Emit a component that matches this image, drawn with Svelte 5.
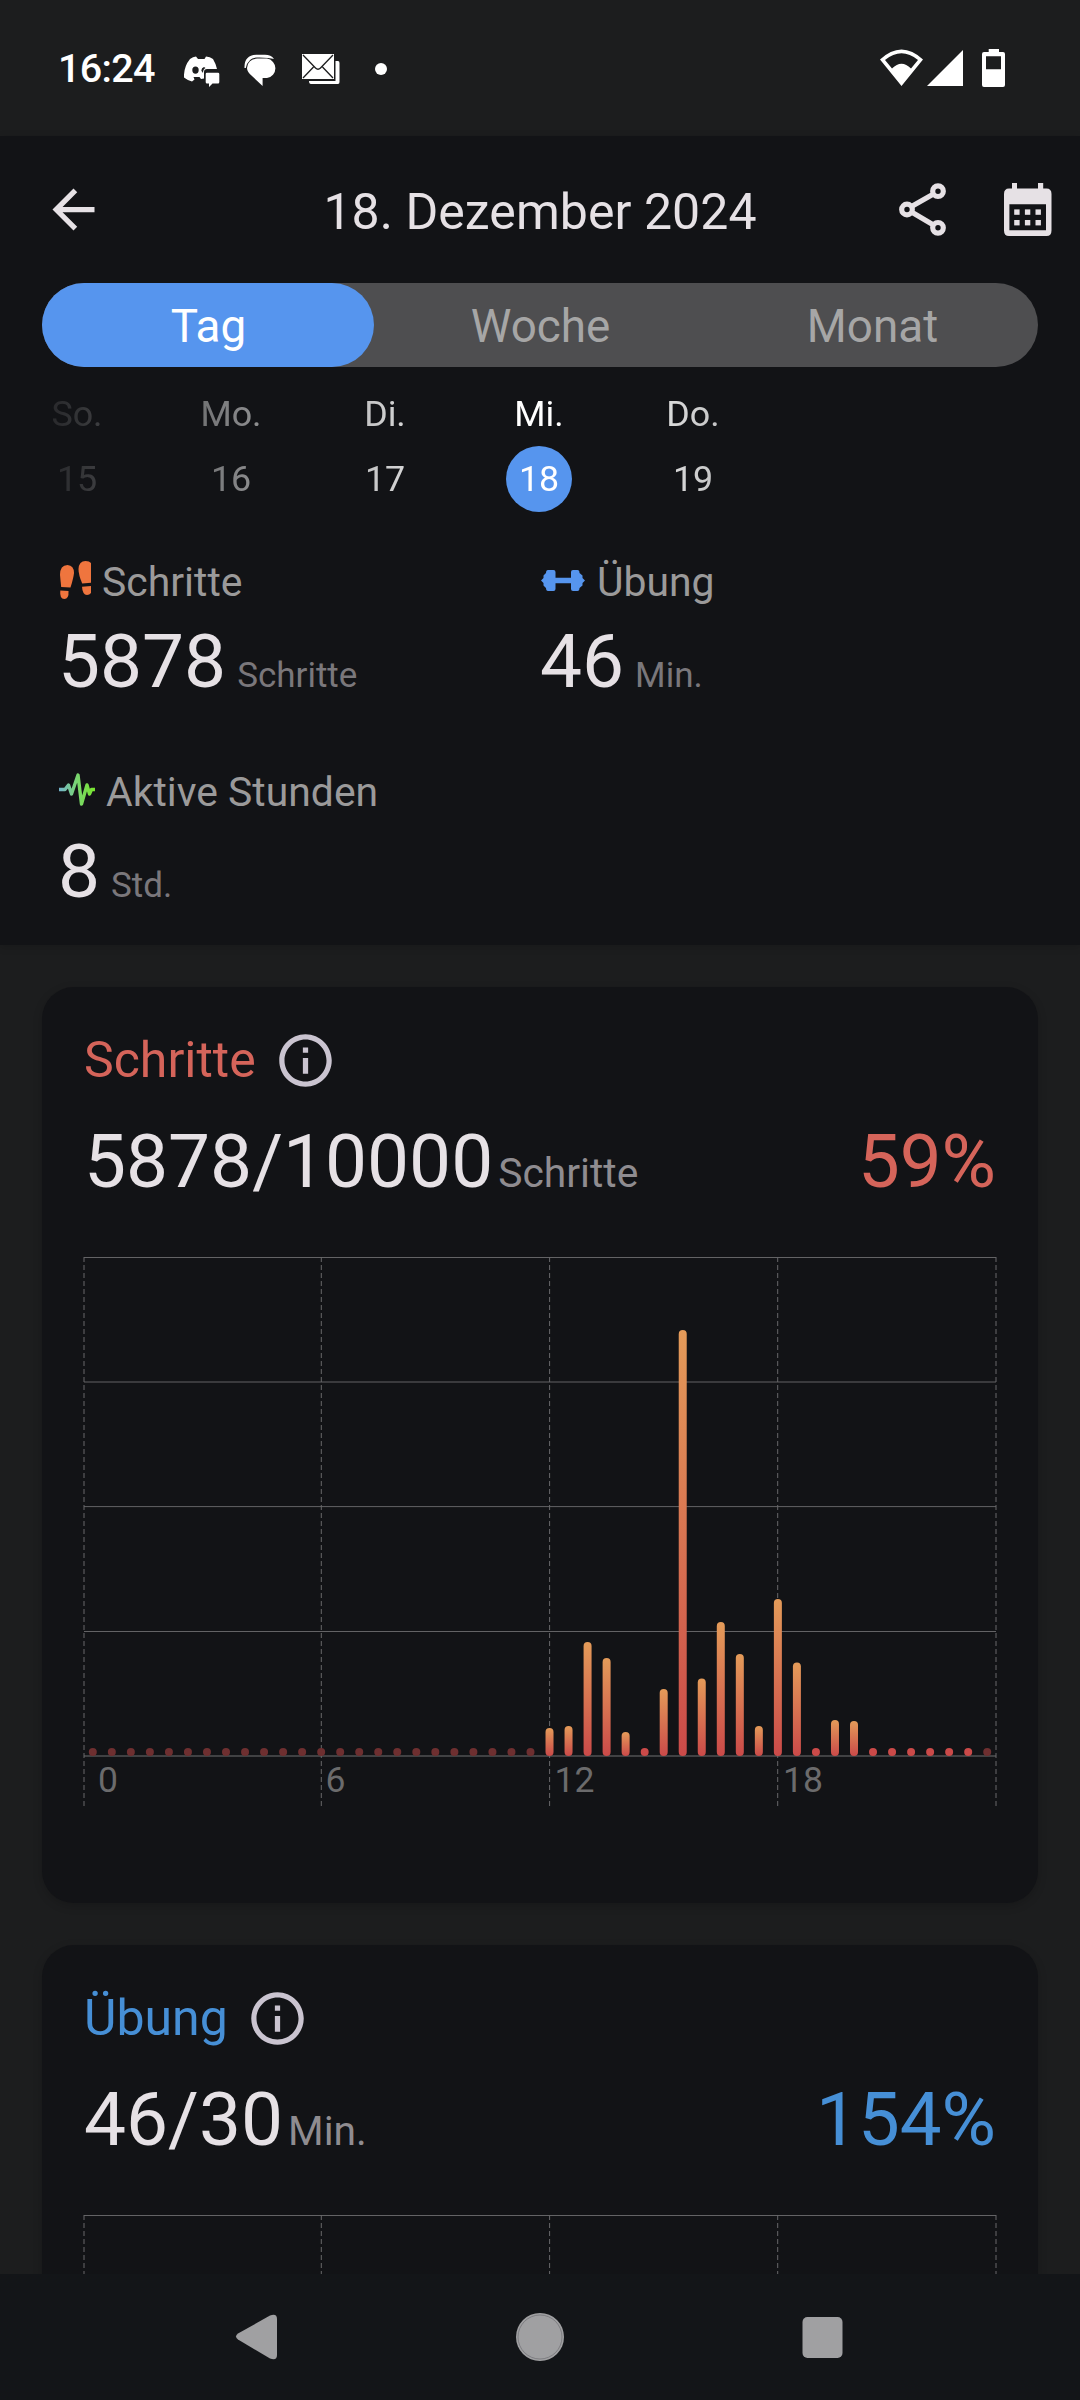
<script lang="ts">
  type Bar = { height: number; active: boolean };

  const tabs = ['Tag', 'Woche', 'Monat'];
  let activeTab = $state('Tag');

  const days = [
    { name: 'So.', date: 15 },
    { name: 'Mo.', date: 16 },
    { name: 'Di.', date: 17 },
    { name: 'Mi.', date: 18 },
    { name: 'Do.', date: 19 }
  ];
  let selectedDate = $state(18);

  const stats = [
    { icon: 'steps', label: 'Schritte', value: 5878, unit: 'Schritte' },
    { icon: 'exercise', label: 'Übung', value: 46, unit: 'Min.' },
    { icon: 'active', label: 'Aktive Stunden', value: 8, unit: 'Std.' }
  ];

  // bar heights per half hour, starting at 12:00; 8 is an empty slot
  const afternoon = [
    28, 30, 114, 98, 24, 8, 67, 426, 77.5, 134, 102, 30,
    157, 93.5, 8, 36, 35, 8, 8, 8, 8, 8, 8
  ];

  const stepBars: Bar[] = Array.from({ length: 48 }, (_, i) => {
    const height = afternoon[i - 24];
    return { height: height ?? 8, active: height !== undefined };
  });

  const cards = [
    { id: 'steps', title: 'Schritte', value: '5878/10000', unit: 'Schritte', percent: 59, bars: stepBars },
    { id: 'exercise', title: 'Übung', value: '46/30', unit: 'Min.', percent: 154, bars: [] as Bar[] }
  ];

  const gridRows = [0.5, 125, 249.6, 374.5];
  const gridCols = [0, 237.3, 465.6, 693.7, 912];
  const hours = [
    { label: '0', x: 14 },
    { label: '6', x: 241.5 },
    { label: '12', x: 470.5 },
    { label: '18', x: 699 }
  ];

  const baseline = 499;
  const barX = (i: number) => 8.8 + i * 19.03 - 4;
</script>

<div class="screen">
  <div class="status-bar">
    <span class="clock">16:24</span>
    <svg class="discord" width="36" height="32" viewBox="0 0 36 32">
      <path
        fill="#fff"
        fill-rule="evenodd"
        d="M6 3Q9 1 12 .6L14 3H20.500L22 .6Q26 1 29 3Q32 8 33 13H23Q20 13 20 16V22.500L17 23L15.500 21H9.500L10.500 23.500L8 25.500Q3 24 0 21.500Q-.5 11 6 3ZM11.500 10.500A3.200 3.600 0 1 0 11.500 17.700A3.200 3.600 0 1 0 11.500 10.500ZM20 11Q17 12 17.500 15L19 17Q19 13 21.500 12Z"
      />
      <path fill="#fff" d="M23 16.700H34Q35.300 16.700 35.300 18V26Q35.300 27.500 34 27.500H28.500L25 31V27.500H23Q21.700 27.500 21.700 26V18Q21.700 16.700 23 16.700Z" />
    </svg>
    <svg class="messages" width="34" height="33" viewBox="0 0 34 33">
      <path fill="#fff" d="M.5 14Q0 1.500 12 .8H21Q27 .8 30 5Q25 3.200 13 3.400Q4 3.500 1.800 14Z" />
      <path fill="#fff" d="M13 4.600H23A9.800 9.800 0 0 1 23 24H18.600V32L8 22Q3 18 3 14A10 9.500 0 0 1 13 4.600Z" />
    </svg>
    <svg class="mail" width="38" height="30" viewBox="0 0 38 30">
      <rect width="32" height="25" fill="#fff" />
      <path d="M1 1L13.500 14Q16 16.500 18.500 14L31 1M1 24L11.500 13M31 24L20.500 13" fill="none" stroke="#1c1d1e" stroke-width="1.300" />
      <path d="M33.500 7H36Q37.500 7 37.500 9V28Q37.500 30 36 30H9Q7 30 7 27H33.500Z" fill="#fff" />
    </svg>
    <span class="more-dot"></span>
    <div class="system-icons">
      <svg width="43" height="38" viewBox="0 0 43 38">
        <path
          fill="#fff"
          fill-rule="evenodd"
          d="M21.500 37L0 10.500Q21.500-9.500 43 10.500ZM5 11L12 19.500Q21.500 10 31 19.500L38 11Q21.500-2.500 5 11Z"
        />
      </svg>
      <svg class="signal" width="36" height="38" viewBox="0 0 36 38">
        <path fill="#fff" d="M0 37L36 1V37Z" />
      </svg>
      <svg class="battery" width="23" height="38" viewBox="0 0 23 38">
        <path
          fill="#fff"
          fill-rule="evenodd"
          d="M6.700 0H17V3H21Q23 3 23 5V36Q23 38 21 38H2Q0 38 0 36V5Q0 3 2 3H6.700ZM4 7.300V20.300H19V7.300Z"
        />
      </svg>
    </div>
  </div>

  <header class="panel">
    <div class="app-bar">
      <button class="back" aria-label="Zurück">
        <svg width="63" height="63" viewBox="0 0 24 24">
          <path fill="#e6e1e5" d="M20 11H7.830l5.590-5.590L12 4l-8 8 8 8 1.410-1.410L7.830 13H20v-2z" />
        </svg>
      </button>
      <h1>18. Dezember 2024</h1>
      <div class="actions">
        <button aria-label="Teilen">
          <svg width="47" height="53" viewBox="0 0 47 53" fill="none" stroke="#e6e1e5" stroke-width="5.200">
            <path d="M12.500 23.500L34.500 11M12.500 29L34.500 42" />
            <circle cx="39" cy="8.200" r="5.300" />
            <circle cx="8" cy="26.500" r="5.300" />
            <circle cx="39" cy="44.800" r="5.300" />
          </svg>
        </button>
        <button aria-label="Kalender">
          <svg width="48" height="53" viewBox="0 0 48 53" fill="#e6e1e5">
            <path
              fill-rule="evenodd"
              d="M8 0H13V5.500H34V0H39.200V5.500H42.500Q47.500 5.500 47.500 11V47.500Q47.500 53 42.500 53H5Q0 53 0 47.500V11Q0 5.500 5 5.500H8ZM5.400 21.300V47.300H42V21.300Z"
            />
            {#each [26.400, 37] as y}
              {#each [10.200, 20.900, 31.500] as x}
                <rect {x} {y} width="5.400" height="5.400" />
              {/each}
            {/each}
          </svg>
        </button>
      </div>
    </div>

    <div class="tabs">
      {#each tabs as tab}
        <button class="tab" class:active={tab === activeTab} onclick={() => (activeTab = tab)}>{tab}</button>
      {/each}
    </div>

    <div class="week">
      {#each days as day}
        <button class="day" class:selected={day.date === selectedDate} onclick={() => (selectedDate = day.date)}>
          <span class="day-name">{day.name}</span>
          <span class="day-date">{day.date}</span>
        </button>
      {/each}
    </div>

    <div class="stats">
      {#each stats as stat}
        <div class="stat">
          <div class="stat-label">
            {#if stat.icon === 'steps'}
              <svg width="34" height="39" viewBox="0 0 34 39" fill="#ef753e">
                <path d="M3.200 26L2 14Q2 4 9.500 4Q16 4.500 16 12Q15.500 17 12.500 26.500Z" />
                <path d="M2.300 29.500L10.500 30Q11 38 6.300 38Q1.500 38 2.300 29.500Z" />
                <path d="M24.200 22.500Q20.500 14 20.500 8Q21 0 27.500 0Q31.500 0 33 2V21.800Z" />
                <path d="M24 25.800L33 25V32Q31.500 34 29 34Q24.500 34 24 25.800Z" />
              </svg>
            {:else if stat.icon === 'exercise'}
              <svg width="47" height="39" viewBox="0 -8 47 39" fill="#5695ee">
                <path d="M8 1H13.500Q15.500 1 15.500 3V8.700H31V3Q31 1 33 1H37.500Q39.500 1 39.500 4L42.500 6.500V9L45 11.500L42.500 14V16.500L39.500 19Q39.500 22 37.500 22H33Q31 22 31 20V14.300H15.500V20Q15.500 22 13.500 22H8Q6 22 6 19L3.500 16.500V14L1 11.500L3.500 9V6.500L6 4Q6 1 8 1Z" />
              </svg>
            {:else}
              <svg width="38" height="39" viewBox="0 -1 38 39">
                <defs>
                  <linearGradient id="pulse" gradientUnits="userSpaceOnUse" x1="1" y1="0" x2="37" y2="0">
                    <stop offset="0" stop-color="#74b4ce" />
                    <stop offset="0.500" stop-color="#79d66f" />
                    <stop offset="1" stop-color="#78e52c" />
                  </linearGradient>
                </defs>
                <path
                  d="M1 17.500H7L10.500 13L13.500 22L20 3L23.500 32L29 13L31.500 22L33.500 17.500H37"
                  fill="none"
                  stroke="url(#pulse)"
                  stroke-width="3.400"
                  stroke-linejoin="round"
                />
              </svg>
            {/if}
            <span>{stat.label}</span>
          </div>
          <div class="stat-value">
            <span class="number">{stat.value}</span>
            <span class="unit">{stat.unit}</span>
          </div>
        </div>
      {/each}
    </div>
  </header>

  <main>
    {#each cards as card}
      <section class="card {card.id}">
        <div class="card-title">
          <h2>{card.title}</h2>
          <svg width="63" height="63" viewBox="0 0 24 24">
            <path
              fill="#cac4d0"
              d="M11 7h2v2h-2zm0 4h2v6h-2zm1-9C6.480 2 2 6.480 2 12s4.480 10 10 10 10-4.480 10-10S17.520 2 12 2zm0 18c-4.410 0-8-3.590-8-8s3.590-8 8-8 8 3.590 8 8-3.590 8-8 8z"
            />
          </svg>
        </div>
        <div class="card-value">
          <span class="number">{card.value}</span>
          <span class="unit">{card.unit}</span>
          <span class="percent">{card.percent}%</span>
        </div>
        <svg class="chart" width="912" height="549" viewBox="0 0 912 549">
          <defs>
            <linearGradient id="bar-{card.id}" x1="0" y1="0" x2="0" y2="1">
              <stop offset="0" stop-color="#e49b59" />
              <stop offset="1" stop-color="#cb4a49" />
            </linearGradient>
          </defs>
          {#each gridRows as y}
            <line class="grid-row" x1="0" x2="912" y1={y} y2={y} />
          {/each}
          <line class="axis" x1="0" x2="912" y1={baseline} y2={baseline} />
          {#each gridCols as x}
            <line class="grid-col" x1={x} x2={x} y1="0" y2="549" />
          {/each}
          {#each card.bars as bar, i}
            {#if bar.height > 8}
              <rect x={barX(i)} y={baseline - bar.height} width="8" height={bar.height} rx="4" fill="url(#bar-{card.id})" />
            {:else}
              <circle class="dot" class:active={bar.active} cx={barX(i) + 4} cy={baseline - 4} r="4" />
            {/if}
          {/each}
          {#if card.bars.length}
            {#each hours as hour}
              <text x={hour.x} y="535">{hour.label}</text>
            {/each}
          {/if}
        </svg>
      </section>
    {/each}
  </main>

  <nav>
    <svg width="48" height="48" viewBox="0 0 48 48">
      <path fill="#a0a0a2" d="M5 20.500L37 2.500Q44 0 44 6V42Q44 48 37 45.500L5 26.500Q1 23.500 5 20.500Z" />
    </svg>
    <svg width="48" height="48" viewBox="0 0 48 48">
      <circle cx="24" cy="24" r="24" fill="#a0a0a2" />
      <circle cx="24" cy="24" r="22" fill="none" stroke="#6f6f72" stroke-width="0.700" />
    </svg>
    <svg width="48" height="48" viewBox="0 0 48 48">
      <rect x="3.500" y="4" width="40" height="41" rx="5" fill="#a0a0a2" />
    </svg>
  </nav>
</div>

<style>
  :global(body) {
    background: #1c1d1e;
  }

  .screen {
    width: 1080px;
    height: 2400px;
    display: flex;
    flex-direction: column;
    overflow: hidden;
    background: #1c1d1e;
    color: #e6e1e5;
    font-family: Roboto, 'Liberation Sans', sans-serif;
  }

  svg {
    display: block;
    flex: none;
  }

  button {
    padding: 0;
    border: 0;
    background: none;
    color: inherit;
    font: inherit;
  }

  h1,
  h2 {
    margin: 0;
    font-size: 50px;
    font-weight: 400;
  }

  /* Status bar */
  .status-bar {
    box-sizing: border-box;
    height: 136px;
    flex: none;
    display: flex;
    align-items: center;
    padding: 0 75px 0 58px;
  }

  .clock {
    width: 98px;
    padding-top: 2px;
    color: #fff;
    font-size: 39.500px;
    font-weight: 500;
    letter-spacing: -0.700px;
    line-height: 48px;
    white-space: nowrap;
  }

  .discord {
    margin: 7px 24px 0 28px;
  }

  .messages {
    margin: 5px 24px 0 0;
  }

  .mail {
    margin-top: 2px;
  }

  .more-dot {
    width: 12px;
    height: 12px;
    margin: 2px 0 0 35px;
    border-radius: 50%;
    background: #fff;
  }

  .system-icons {
    display: flex;
    margin-left: auto;
  }

  .signal {
    margin: 0 19px 0 4px;
  }

  /* Header panel */
  .panel {
    flex: none;
    padding-bottom: 30px;
    background: #121316;
    box-shadow: 0 2px 8px rgba(0, 0, 0, 0.15);
  }

  .app-bar {
    height: 147px;
    display: grid;
    grid-template-columns: 1fr auto 1fr;
    align-items: center;
  }

  .back {
    justify-self: start;
    margin-left: 42px;
  }

  h1 {
    padding-top: 5px;
    letter-spacing: 0.050px;
    line-height: 60px;
  }

  .actions {
    display: flex;
    justify-content: flex-end;
    gap: 58px;
    padding-right: 28px;
  }

  .tabs {
    height: 84px;
    margin: 0 42px;
    display: grid;
    grid-template-columns: repeat(3, 1fr);
    border-radius: 42px;
    background: #4e4e50;
  }

  .tab {
    padding: 4px 0 0 1px;
    border-radius: 42px;
    color: #a6a6a6;
    font-size: 45.800px;
    line-height: 80px;
  }

  .tab.active {
    background: #5695ee;
    color: #fff;
  }

  /* Days fade out towards both edges of the strip */
  .week {
    display: grid;
    grid-template-columns: repeat(7, 154px);
    padding-top: 26px;
    mask-image: linear-gradient(
      to right,
      rgba(0, 0, 0, 0.020) 0,
      rgba(0, 0, 0, 0.140) 80px,
      rgba(0, 0, 0, 0.470) 231px,
      rgba(0, 0, 0, 0.790) 385px,
      #000 506px,
      #000 572px,
      rgba(0, 0, 0, 0.800) 695px,
      transparent
    );
  }

  .day {
    display: flex;
    flex-direction: column;
    align-items: center;
    gap: 11px;
    color: #fff;
    font-size: 35.800px;
  }

  .day-name {
    line-height: 42px;
  }

  .day-date {
    width: 66px;
    height: 66px;
    border-radius: 50%;
    line-height: 66px;
    text-align: center;
  }

  .selected .day-date {
    background: #5695ee;
  }

  .stats {
    display: grid;
    grid-template-columns: 482px 1fr;
    row-gap: 63px;
    padding: 46px 0 0 58px;
  }

  .stat-label {
    height: 48px;
    display: flex;
    align-items: center;
    gap: 10px;
    margin-bottom: 12px;
    color: #9b9a9a;
    font-size: 40.900px;
    line-height: 48px;
  }

  .stat-label svg {
    margin-bottom: 4px;
  }

  .stat-value {
    display: flex;
    align-items: baseline;
    gap: 11px;
    margin-bottom: -1px;
  }

  .number {
    font-size: 74.800px;
    line-height: 88px;
  }

  .stat-value .unit {
    color: #7a777b;
    font-size: 35px;
    line-height: 42px;
  }

  /* Cards */
  main {
    flex: 1;
    min-height: 0;
    overflow: hidden;
    display: flex;
    flex-direction: column;
    gap: 42px;
    padding: 42px 42px 0;
  }

  .card {
    flex: none;
    padding: 42px 42px 97px;
    border-radius: 32px;
    background: #121316;
    box-shadow: 0 3px 10px rgba(0, 0, 0, 0.180);
  }

  .card-title {
    display: flex;
    align-items: center;
    gap: 18.500px;
    margin-bottom: 26px;
  }

  .card-title h2 {
    line-height: 63px;
  }

  .card-value {
    display: flex;
    align-items: baseline;
    margin-bottom: 51px;
  }

  .card-value .unit {
    margin-left: 5px;
    color: #8f8c90;
    font-size: 40.800px;
    line-height: 48px;
  }

  .percent {
    margin-left: auto;
    font-size: 74.400px;
    line-height: 88px;
  }

  .steps h2,
  .steps .percent {
    color: #d5645a;
  }

  .exercise h2,
  .exercise .percent {
    color: #468fd6;
  }

  .chart {
    overflow: visible;
  }

  .grid-row {
    stroke: #636365;
    stroke-width: 1;
  }

  .axis {
    stroke: #404143;
    stroke-width: 2;
  }

  .grid-col {
    stroke: #68686a;
    stroke-width: 1;
    stroke-dasharray: 5 3;
  }

  .dot {
    fill: #6e2f30;
  }

  .dot.active {
    fill: #cb4a49;
  }

  .chart text {
    fill: #6b6b6c;
    font-size: 35.500px;
  }

  nav {
    height: 126px;
    flex: none;
    display: flex;
    align-items: center;
    justify-content: center;
    gap: 235px;
    background: #131518;
  }
</style>
